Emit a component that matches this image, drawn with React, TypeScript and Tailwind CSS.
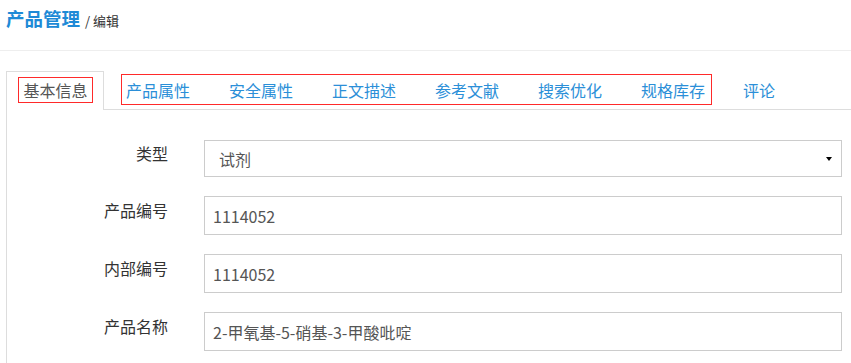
const font = { fontFamily: '"Noto Sans CJK SC", "Noto Sans", sans-serif' };

const groupTabs = ["产品属性", "安全属性", "正文描述", "参考文献", "搜索优化", "规格库存"];

const fields = [
  { label: "产品编号", value: "1114052" },
  { label: "内部编号", value: "1114052" },
  { label: "产品名称", value: "2-甲氧基-5-硝基-3-甲酸吡啶" },
];

export default function App() {
  return (
    <div
      className="w-[851px] h-[363px] overflow-hidden bg-white"
      style={font}
    >
      {/* page header */}
      <div className="h-[51px] border-b border-[#eeeeee] px-[6px] pt-[5px] flex items-baseline">
        <h1 className="text-[18.5px] leading-[26px] font-bold text-[#1e8ad6]">产品管理</h1>
        <span className="ml-[5px] text-[13px] text-[#333]">/ 编辑</span>
      </div>

      {/* tabs */}
      <div className="pl-[6px] pt-[20px]">
        <div className="flex items-start h-[39px] border-b border-[#dddddd]">
          <div className="w-[98px] h-[39px] border border-b-0 border-[#dddddd] bg-white pl-[11px] pt-[5px]">
            <span className="flex items-center justify-center w-[75px] h-[26px] border border-[#ff2a2a] text-[16px] text-[#555]">
              基本信息
            </span>
          </div>
          <div className="ml-[17px] mt-[3px] h-[31px] flex items-center gap-[39px] border border-[#ff2a2a] pl-[4px] pr-[6px]">
            {groupTabs.map((t) => (
              <span key={t} className="text-[16px] leading-[20px] text-[#2b8fd8]">
                {t}
              </span>
            ))}
          </div>
          <span className="ml-[31px] mt-[9px] text-[16px] leading-[20px] text-[#2b8fd8]">评论</span>
        </div>

        {/* tab pane */}
        <div className="border-l border-[#dddddd] h-[260px] pt-[30px] flex flex-col gap-[19px]">
          <div className="flex">
            <label className="w-[161px] text-right text-[16px] leading-[26px] text-[#333]">类型</label>
            <div className="ml-[36px] w-[638px] h-[37px] border border-[#cccccc] flex items-center pl-[14px] pr-[9px]">
              <span className="flex-1 text-[16px] text-[#555]">试剂</span>
              <span className="w-0 h-0 border-x-[3px] border-x-transparent border-t-[4px] border-t-black" />
            </div>
          </div>
          {fields.map((f) => (
            <div key={f.label} className="flex">
              <label className="w-[161px] pt-[1px] text-right text-[16px] leading-[26px] text-[#333]">
                {f.label}
              </label>
              <div className="ml-[36px] w-[638px] h-[39px] border border-[#cccccc] flex items-center pl-[8px]">
                <span className="text-[16px] text-[#555]">{f.value}</span>
              </div>
            </div>
          ))}
        </div>
      </div>
    </div>
  );
}
